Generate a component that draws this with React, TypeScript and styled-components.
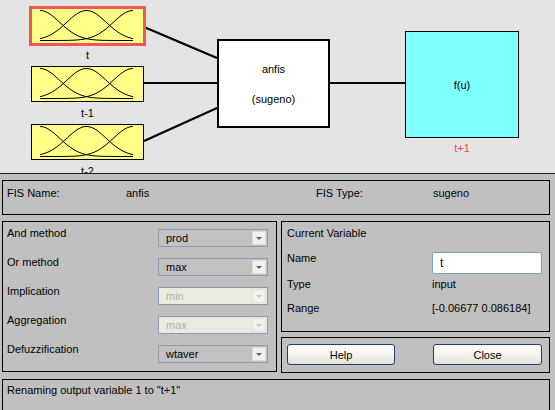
import React, { FC } from 'react';
import styled, { createGlobalStyle } from 'styled-components';

const GlobalStyle = createGlobalStyle`
  html, body {
    margin: 0;
    padding: 0;
    background: #c0c0c0;
  }
  body {
    font-family: "Liberation Sans", Arial, sans-serif;
    font-size: 11px;
    color: #000;
  }
`;

const Window = styled.div`
  width: 555px;
  height: 410px;
  overflow: hidden;
  display: flex;
  flex-direction: column;
  background: #c0c0c0;
`;

/* ---------- diagram ---------- */

const Diagram = styled.div`
  position: relative;
  height: 173px;
  flex: none;
  background: #e4e4e4;
  overflow: hidden;
`;

const Wires = styled.svg`
  position: absolute;
  left: 0;
  top: 0;
  width: 555px;
  height: 173px;
`;

const InputNode = styled.div<{ $top: number; $selected?: boolean }>`
  position: absolute;
  left: ${(p) => (p.$selected ? 29 : 31)}px;
  top: ${(p) => p.$top}px;
  width: 111px;
  height: 34px;
  background: #ffff88;
  border: ${(p) => (p.$selected ? '3px solid #f05656' : '1px solid #000')};
  svg {
    display: block;
    width: 111px;
    height: 34px;
  }
`;

const NodeLabel = styled.div<{ $top: number }>`
  position: absolute;
  left: 31px;
  top: ${(p) => p.$top}px;
  width: 113px;
  text-align: center;
  line-height: 13px;
`;

const SystemNode = styled.div`
  position: absolute;
  left: 217px;
  top: 39px;
  width: 109px;
  height: 63px;
  border: 2px solid #000;
  background: #fff;
  display: flex;
  flex-direction: column;
  align-items: center;
  padding-top: 22px;
  box-sizing: content-box;
  gap: 17px;
  line-height: 13px;
`;

const OutputNode = styled.div`
  position: absolute;
  left: 405px;
  top: 31px;
  width: 112px;
  height: 105px;
  border: 1px solid #000;
  background: #80ffff;
  display: flex;
  align-items: center;
  justify-content: center;
`;

const OutputLabel = styled.div`
  position: absolute;
  left: 405px;
  top: 142px;
  width: 114px;
  text-align: center;
  line-height: 13px;
  color: #e34d4d;
`;

const mfPath = (c: number) => {
  const sigma = 19.7;
  const pts: string[] = [];
  for (let x = 8; x <= 101.01; x += 1) {
    const y = 31.5 - 30 * Math.exp(-((x - c) * (x - c)) / (2 * sigma * sigma));
    pts.push(`${x.toFixed(1)},${y.toFixed(2)}`);
  }
  return 'M' + pts.join(' L');
};

const MfPlot: FC = () => (
  <svg viewBox="0 0 111 34" preserveAspectRatio="none">
    {[8, 54.5, 101].map((c) => (
      <path key={c} d={mfPath(c)} fill="none" stroke="#000" strokeWidth={1} />
    ))}
  </svg>
);

/* ---------- lower controls ---------- */

const Lower = styled.div`
  flex: 1;
  border-top: 1px solid #222;
  padding: 6px 5px 0 2px;
  display: flex;
  flex-direction: column;
  gap: 6px;
  min-height: 0;
`;

const Panel = styled.div`
  border: 1px solid #000;
  background: #c0c0c0;
  box-sizing: border-box;
`;

const NamePanel = styled(Panel)`
  height: 35px;
  padding: 6px 0 0 4px;
  display: grid;
  grid-template-columns: 119px 190px 117px 1fr;
  align-items: start;
  line-height: 13px;
`;

const MiddleRow = styled.div`
  display: grid;
  grid-template-columns: 275px 269px;
  column-gap: 4px;
  height: 152px;
  align-items: start;
`;

const MethodPanel = styled(Panel)`
  height: 151px;
  padding: 5px 0 0 4px;
`;

const MethodRow = styled.div`
  display: grid;
  grid-template-columns: 151px 110px;
  height: 29px;
  align-items: start;
`;

const Label = styled.span`
  line-height: 13px;
  white-space: nowrap;
`;

const Select = styled.div<{ $disabled?: boolean }>`
  margin-top: 2px;
  height: 18px;
  box-sizing: border-box;
  border: 1px solid #8a9bb0;
  background: ${(p) => (p.$disabled ? '#ebebe4' : '#c2c2c2')};
  color: ${(p) => (p.$disabled ? '#b4b0a0' : '#000')};
  display: flex;
  align-items: center;
  justify-content: space-between;
  padding: 0 1px 0 7px;
  line-height: 13px;
`;

const SelectArrow = styled.span<{ $disabled?: boolean }>`
  width: 14px;
  height: 14px;
  box-sizing: border-box;
  border: 1px solid ${(p) => (p.$disabled ? '#e4e2d8' : '#dcdad0')};
  background: ${(p) => (p.$disabled ? '#f2f1ea' : '#f3f2ea')};
  display: flex;
  align-items: center;
  justify-content: center;
  &::after {
    content: '';
    border-left: 3px solid transparent;
    border-right: 3px solid transparent;
    border-top: 3px solid ${(p) => (p.$disabled ? '#c9c7bb' : '#4d6185')};
    margin-top: 1px;
  }
`;

const RightColumn = styled.div`
  display: flex;
  flex-direction: column;
  gap: 5px;
`;

const VariablePanel = styled(Panel)`
  height: 111px;
  padding: 5px 0 0 5px;
`;

const VarRow = styled.div<{ $mt?: number }>`
  display: grid;
  grid-template-columns: 145px 110px;
  align-items: start;
  margin-top: ${(p) => p.$mt ?? 0}px;
`;

const TextField = styled.div`
  height: 22px;
  box-sizing: border-box;
  border: 1px solid #7f9db9;
  border-radius: 2px;
  background: #fff;
  padding: 0 7px;
  display: flex;
  align-items: center;
  font-size: 12px;
`;

const ButtonPanel = styled(Panel)`
  height: 36px;
  padding: 6px 0 0 5px;
  display: grid;
  grid-template-columns: 108px 109px;
  column-gap: 38px;
  align-items: start;
`;

const Button = styled.button`
  height: 21px;
  box-sizing: border-box;
  border: 1px solid #1c3f6e;
  border-radius: 3px;
  background: linear-gradient(#ffffff, #f3f2ec 60%, #e3e0d2);
  font-family: inherit;
  font-size: 11px;
  color: #000;
  padding: 0;
`;

const StatusPanel = styled(Panel)`
  flex: 1;
  border-bottom: none;
  padding: 4px 0 0 4px;
  line-height: 13px;
`;

const methods: { label: string; value: string; disabled?: boolean }[] = [
  { label: 'And method', value: 'prod' },
  { label: 'Or method', value: 'max' },
  { label: 'Implication', value: 'min', disabled: true },
  { label: 'Aggregation', value: 'max', disabled: true },
  { label: 'Defuzzification', value: 'wtaver' },
];

const App: FC = () => (
  <>
    <GlobalStyle />
    <Window>
      <Diagram>
        <Wires viewBox="0 0 555 173">
          <g stroke="#000" strokeWidth={2.2} fill="none">
            <line x1={144} y1={27} x2={217} y2={58} />
            <line x1={144} y1={83} x2={217} y2={83} />
            <line x1={144} y1={141} x2={217} y2={108} />
            <line x1={330} y1={83} x2={405} y2={83} />
          </g>
        </Wires>
        <InputNode $top={6} $selected>
          <MfPlot />
        </InputNode>
        <NodeLabel $top={49}>t</NodeLabel>
        <InputNode $top={66}>
          <MfPlot />
        </InputNode>
        <NodeLabel $top={107}>t-1</NodeLabel>
        <InputNode $top={124}>
          <MfPlot />
        </InputNode>
        <NodeLabel $top={165}>t-2</NodeLabel>
        <SystemNode>
          <span>anfis</span>
          <span>(sugeno)</span>
        </SystemNode>
        <OutputNode>f(u)</OutputNode>
        <OutputLabel>t+1</OutputLabel>
      </Diagram>

      <Lower>
        <NamePanel>
          <Label>FIS Name:</Label>
          <Label>anfis</Label>
          <Label>FIS Type:</Label>
          <Label>sugeno</Label>
        </NamePanel>

        <MiddleRow>
          <MethodPanel>
            {methods.map((m) => (
              <MethodRow key={m.label}>
                <Label>{m.label}</Label>
                <Select $disabled={m.disabled}>
                  <span>{m.value}</span>
                  <SelectArrow $disabled={m.disabled} />
                </Select>
              </MethodRow>
            ))}
          </MethodPanel>

          <RightColumn>
            <VariablePanel>
              <Label>Current Variable</Label>
              <VarRow $mt={12}>
                <Label>Name</Label>
                <TextField>t</TextField>
              </VarRow>
              <VarRow $mt={4}>
                <Label>Type</Label>
                <Label>input</Label>
              </VarRow>
              <VarRow $mt={11}>
                <Label>Range</Label>
                <Label>[-0.06677 0.086184]</Label>
              </VarRow>
            </VariablePanel>
            <ButtonPanel>
              <Button>Help</Button>
              <Button>Close</Button>
            </ButtonPanel>
          </RightColumn>
        </MiddleRow>

        <StatusPanel>Renaming output variable 1 to "t+1"</StatusPanel>
      </Lower>
    </Window>
  </>
);

export default App;
